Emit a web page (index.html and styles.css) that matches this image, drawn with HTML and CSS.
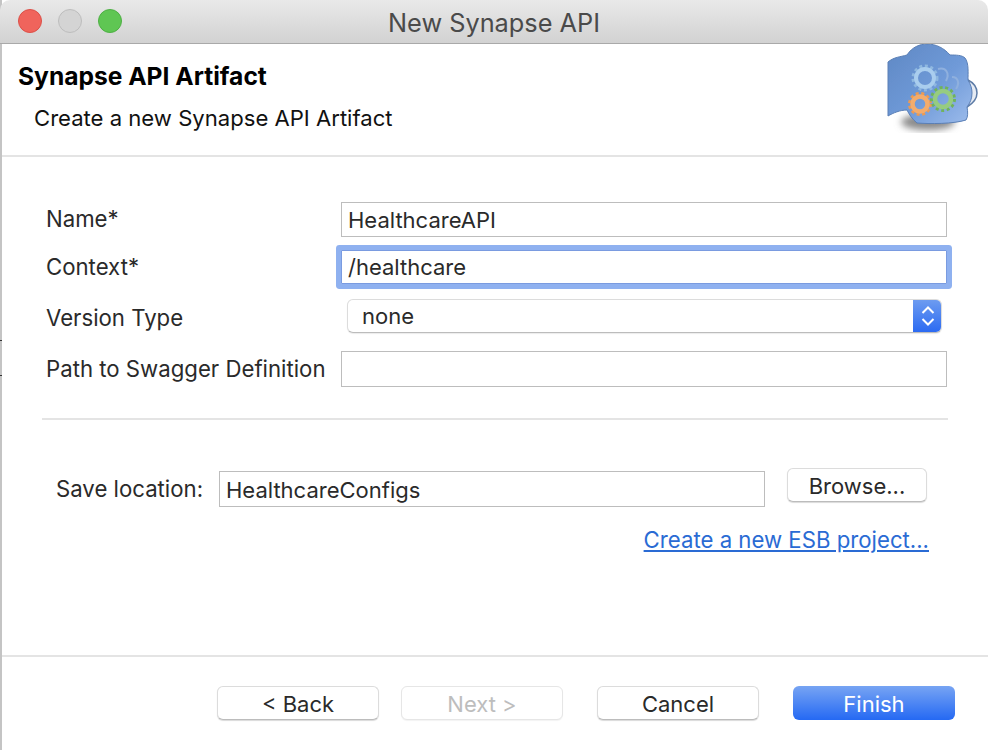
FILE: index.html
```html
<!DOCTYPE html>
<html lang="en">
<head>
    <meta charset="UTF-8">
    <meta name="viewport" content="width=device-width, initial-scale=1.0">
    <title>New Synapse API</title>
    <link rel="stylesheet" href="styles.css">
</head>
<body>

<div class="window">
    <div class="titlebar">
        <div class="lights">
            <span class="light light-red"></span>
            <span class="light light-gray"></span>
            <span class="light light-green"></span>
        </div>
        <div class="window-title">New Synapse API</div>
    </div>

    <div class="banner">
        <div class="banner-text">
            <h1>Synapse API Artifact</h1>
            <p>Create a new Synapse API Artifact</p>
        </div>
        <svg class="banner-icon" width="100" height="90" viewBox="0 0 100 90">
            <defs>
                <linearGradient id="cloud" x1="0" y1="0" x2="1" y2="1">
                    <stop offset="0" stop-color="#5f88c4"/>
                    <stop offset="0.55" stop-color="#6f9ad8"/>
                    <stop offset="1" stop-color="#9dbcec"/>
                </linearGradient>
                <filter id="blur" x="-30%" y="-60%" width="160%" height="220%">
                    <feGaussianBlur stdDeviation="3.5"/>
                </filter>
                <filter id="soft">
                    <feGaussianBlur stdDeviation="0.5"/>
                </filter>
            </defs>
            <ellipse cx="44" cy="79" rx="27" ry="8" fill="#8a8a8a" filter="url(#blur)"/>
            <g filter="url(#soft)">
                <path d="M93 50 C93 44 90 40 84 37 L83 64 C88 61 93 56 93 50 Z" fill="#e6ebf3" stroke="#5d7ba6" stroke-width="1.5"/>
                <path d="M4 19 C10 14 16 14 23 12 C28 4 36 1 43 1 C52 1 60 5 66 12 C72 12 78 12 81 15 C85 20 84 30 84 37 C87 42 88 46 88 50 C88 56 86 60 83 64 C84 69 84 74 82 77 C70 81 45 81 33 80 C28 76 25 71 23 67 C16 67 9 70 4 73 Z" fill="url(#cloud)" stroke="#5a7fb5"/>
                <path d="M54 26 C62 24 66 30 62 38 M68 34 C74 34 76 40 72 46" fill="none" stroke="#8fb0de" stroke-width="2"/>
                <circle class="gear-teeth" cx="41" cy="35" r="12" stroke="#8fb8e0"/>
                <circle cx="41" cy="35" r="9" fill="none" stroke="#a9cdee" stroke-width="4"/>
                <circle class="gear-teeth" cx="36" cy="61" r="10.5" stroke="#ec9a52"/>
                <circle cx="36" cy="61" r="7.5" fill="none" stroke="#f3ac6c" stroke-width="4.5"/>
                <circle class="gear-teeth" cx="59" cy="56" r="11.5" stroke="#6fb35a"/>
                <circle cx="59" cy="56" r="8" fill="none" stroke="#96cc80" stroke-width="4.5"/>
            </g>
        </svg>
    </div>

    <div class="form">
        <div class="form-row row-name">
            <label class="form-label">Name*</label>
            <div class="text-input">HealthcareAPI</div>
        </div>
        <div class="form-row row-context">
            <label class="form-label">Context*</label>
            <div class="text-input focused">/healthcare</div>
        </div>
        <div class="form-row row-version">
            <label class="form-label">Version Type</label>
            <div class="select">
                <span class="select-value">none</span>
                <span class="select-arrows">
                    <svg width="14" height="22" viewBox="0 0 14 22">
                        <path d="M1.5 8 L7 2.5 L12.5 8 M1.5 14 L7 19.5 L12.5 14" fill="none" stroke="#fff" stroke-width="2"/>
                    </svg>
                </span>
            </div>
        </div>
        <div class="form-row row-path">
            <label class="form-label">Path to Swagger Definition</label>
            <div class="text-input"></div>
        </div>

        <hr class="divider">

        <div class="save-row">
            <label class="save-label">Save location:</label>
            <div class="text-input save-input">HealthcareConfigs</div>
            <button class="btn btn-browse">Browse...</button>
        </div>
        <div class="link-row">
            <a class="link" href="#">Create a new ESB project...</a>
        </div>
    </div>

    <div class="footer">
        <button class="btn">&lt; Back</button>
        <button class="btn btn-disabled">Next &gt;</button>
        <button class="btn btn-cancel">Cancel</button>
        <button class="btn btn-primary">Finish</button>
    </div>
</div>

</body>
</html>
```

FILE: styles.css
```css
/* Global Styles */
* {
    margin: 0;
    padding: 0;
    box-sizing: border-box;
}

body {
    font-family: 'Inter', 'Liberation Sans', sans-serif;
    font-size: 22px;
    color: #2a2a2a;
    background-color: #fff;
    overflow: hidden;
}

.window {
    width: 988px;
    height: 750px;
    display: flex;
    flex-direction: column;
    padding-left: 2px;
    background:
        linear-gradient(#333, #333) 0 340px / 2px 1px no-repeat,
        linear-gradient(#333, #333) 0 375px / 2px 1px no-repeat,
        linear-gradient(#c4c4c4, #c4c4c4) 0 0 / 2px 100% no-repeat,
        #fff;
}

/* Title bar */
.titlebar {
    height: 44px;
    margin-left: -2px;
    display: flex;
    align-items: center;
    position: relative;
    background: linear-gradient(#e9e9e9, #d2d2d2);
    border-bottom: 1px solid #a9a9a9;
    border-radius: 10px 10px 0 0;
}

.lights {
    display: flex;
    gap: 16px;
    padding-left: 18px;
    padding-bottom: 1px;
}

.light {
    width: 24px;
    height: 24px;
    border-radius: 50%;
    border: 1px solid transparent;
}

.light-red {
    background: #f0645c;
    border-color: #dc5048;
}

.light-gray {
    background: #d4d4d4;
    border-color: #bdbdbd;
}

.light-green {
    background: #5fc653;
    border-color: #4eb044;
}

.window-title {
    position: absolute;
    left: 0;
    right: 0;
    text-align: center;
    font-size: 25.3px;
    color: #4a4a4a;
    padding-top: 1px;
}

/* Banner */
.banner {
    height: 113px;
    flex-shrink: 0;
    display: flex;
    justify-content: space-between;
    border-bottom: 2px solid #e4e4e4;
    padding-left: 16px;
}

.banner-text h1 {
    font-size: 24.6px;
    font-weight: 700;
    color: #000;
    margin-top: 19px;
    line-height: 26px;
}

.banner-text p {
    color: #111;
    font-size: 22.1px;
    margin-top: 16px;
    margin-left: 16px;
    line-height: 26px;
}

.banner-icon {
    margin-right: 4px;
    margin-top: -1px;
}

.gear-teeth {
    fill: none;
    stroke-width: 3;
    stroke-dasharray: 3 2.6;
}

/* Form */
.form {
    flex: 1;
    padding-left: 40px;
    padding-top: 45px;
}

.form-row {
    display: grid;
    grid-template-columns: 299px 606px;
    align-items: center;
}

.form-label {
    padding-left: 4px;
    font-size: 22.2px;
}

.row-name {
    height: 35px;
}

.row-name .form-label {
    margin-top: -3px;
}

.row-context {
    height: 34px;
    margin-top: 13px;
}

.row-context .form-label {
    margin-top: -2px;
}

.row-version {
    height: 34px;
    margin-top: 15px;
}

.row-version .form-label {
    margin-top: 3px;
}

.row-path {
    height: 36px;
    margin-top: 18px;
}

.row-path .form-label {
    margin-top: -2px;
}

.text-input {
    height: 100%;
    border: 1px solid #bdbdbd;
    padding-left: 6px;
    display: flex;
    align-items: center;
    background: #fff;
}

.text-input.focused {
    border-color: #7a9be0;
    border-radius: 1px;
    box-shadow: 0 0 0 5px #8fb1f0;
}

.select {
    height: 100%;
    margin: 0 5px 0 6px;
    display: flex;
    justify-content: space-between;
    background: #fff;
    border-radius: 6px;
    border: 1px solid #dcdcdc;
    border-bottom-color: #bcbcbc;
    box-shadow: 0 1px 1px rgba(0, 0, 0, 0.08);
    overflow: hidden;
}

.select-value {
    padding-left: 14px;
    display: flex;
    align-items: center;
}

.select-arrows {
    width: 29px;
    margin: -1px -1px -1px 0;
    display: flex;
    align-items: center;
    justify-content: center;
    background: linear-gradient(#6f9df0, #2a69f2);
}

.divider {
    width: 906px;
    border: none;
    border-top: 2px solid #e4e4e4;
    margin-top: 31px;
}

.save-row {
    display: flex;
    align-items: flex-start;
    margin-top: 51px;
}

.save-label {
    width: 177px;
    padding-left: 14px;
    line-height: 36px;
    flex-shrink: 0;
    font-size: 22.2px;
}

.save-input {
    width: 546px;
    height: 36px;
    padding-top: 2px;
}

.btn {
    font-family: inherit;
    font-size: 22px;
    width: 162px;
    height: 34px;
    padding-top: 2px;
    color: #2a2a2a;
    background: #fff;
    border: 1px solid #dcdcdc;
    border-bottom-color: #bcbcbc;
    border-radius: 6px;
    box-shadow: 0 1px 1px rgba(0, 0, 0, 0.15);
}

.btn-browse {
    width: 140px;
    margin-left: 22px;
    margin-top: -3px;
}

.link-row {
    width: 887px;
    margin-top: 19px;
    text-align: right;
}

.link {
    color: #2a6bd4;
    font-size: 22.2px;
}

/* Footer */
.footer {
    height: 95px;
    flex-shrink: 0;
    display: flex;
    border-top: 2px solid #e4e4e4;
    padding-left: 215px;
    padding-top: 29px;
}

.btn-disabled {
    margin-left: 22px;
    color: #bdbdbd;
    border-color: #e6e6e6;
    box-shadow: 0 1px 1px rgba(0, 0, 0, 0.05);
}

.btn-cancel {
    margin-left: 34px;
}

.btn-primary {
    margin-left: 34px;
    color: #fff;
    border: none;
    background: linear-gradient(#77a4f3, #2569f3);
    box-shadow: none;
}
```
